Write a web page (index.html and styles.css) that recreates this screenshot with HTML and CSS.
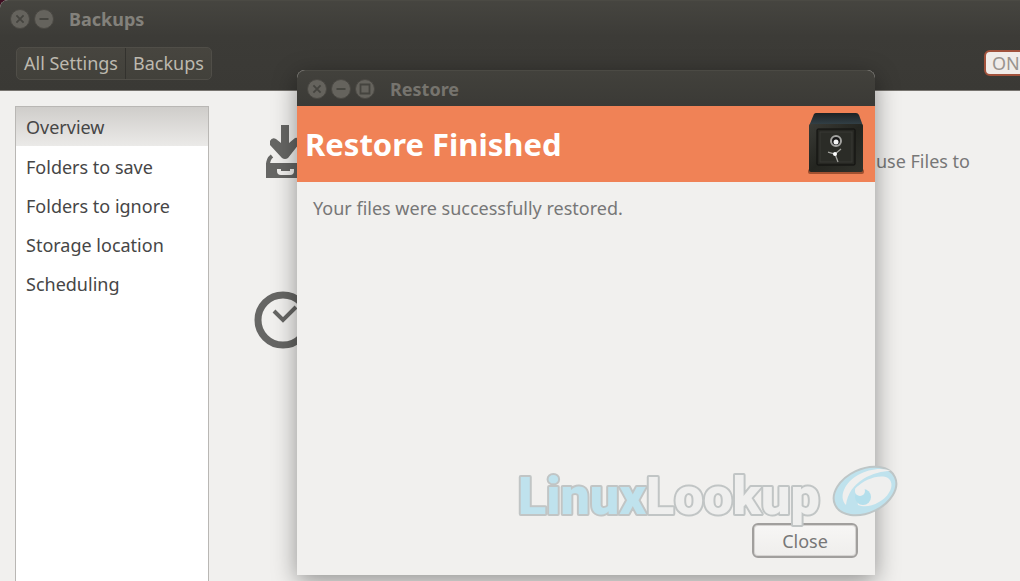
FILE: index.html
```html
<!DOCTYPE html>
<html lang="en">
<head>
<meta charset="utf-8">
<title>Backups</title>
<link rel="stylesheet" href="styles.css">
</head>
<body>
<div class="desktop">
  <div class="window">
    <header class="window-header">
      <div class="titlebar">
        <button class="wm-button" aria-label="Close window"><svg viewBox="0 0 20 20"><path d="M6 6l8 8M14 6l-8 8"/></svg></button>
        <button class="wm-button" aria-label="Minimize window"><svg viewBox="0 0 20 20"><path d="M5 10h10"/></svg></button>
        <h1 class="window-title">Backups</h1>
      </div>
      <div class="toolbar">
        <nav class="crumbs">
          <button class="crumb">All Settings</button>
          <button class="crumb">Backups</button>
        </nav>
        <button class="switch" role="switch" aria-checked="true" aria-label="ON">ON</button>
      </div>
    </header>
    <div class="window-body">
      <nav class="sidebar">
        <a class="side-item selected" href="#overview">Overview</a>
        <a class="side-item" href="#save">Folders to save</a>
        <a class="side-item" href="#ignore">Folders to ignore</a>
        <a class="side-item" href="#storage">Storage location</a>
        <a class="side-item" href="#scheduling">Scheduling</a>
      </nav>
      <main class="overview">
        <section class="row">
          <svg class="row-icon" viewBox="0 0 60 60" aria-hidden="true">
            <path class="fill" d="M27 3h8v18l6-5q4-1 4 4v2L34 36q-3 2-6 0L16 23v-4q2-4 6-2l5 4z"/>
            <path class="line" d="M14 43q0-6 4-9"/>
            <path class="fill" d="M12 41h38v15H12zM23 47v2q0 4 4 4h9q4 0 4-4v-2h-4v2h-9v-2z" fill-rule="evenodd"/>
          </svg>
          <p class="row-text">use Files to</p>
        </section>
        <section class="row">
          <svg class="row-icon" viewBox="0 0 60 60" aria-hidden="true">
            <circle class="ring" cx="29" cy="30" r="25"/>
            <path class="hands" d="M20 21l9 9 13-13"/>
          </svg>
        </section>
      </main>
    </div>
  </div>

  <div class="dialog" role="dialog" aria-labelledby="dialog-heading">
    <div class="dialog-titlebar">
      <button class="wm-button" aria-label="Close dialog"><svg viewBox="0 0 20 20"><path d="M6 6l8 8M14 6l-8 8"/></svg></button>
      <button class="wm-button" aria-label="Minimize dialog"><svg viewBox="0 0 20 20"><path d="M5 10h10"/></svg></button>
      <button class="wm-button" aria-label="Maximize dialog"><svg viewBox="0 0 20 20"><path d="M5 5h10v10H5z"/></svg></button>
      <span class="window-title">Restore</span>
    </div>
    <div class="banner">
      <h2 class="banner-title" id="dialog-heading">Restore Finished</h2>
      <svg class="safe" viewBox="0 0 60 66" aria-hidden="true">
        <defs>
          <linearGradient id="safe-top" x1="0" y1="0" x2="0" y2="1"><stop offset="0" stop-color="#1d2224"/><stop offset="1" stop-color="#35444b"/></linearGradient>
          <linearGradient id="safe-front" x1="0" y1="0" x2="1" y2="1"><stop offset="0" stop-color="#3a3b36"/><stop offset=".5" stop-color="#242520"/><stop offset="1" stop-color="#30312b"/></linearGradient>
        </defs>
        <rect x="2" y="58" width="56" height="5" rx="2" fill="#6b2f18" opacity=".6"/>
        <path d="M8 3q1-1 2-1h40q2 0 3 2l4 11H3z" fill="url(#safe-top)"/>
        <rect x="3" y="13" width="54" height="48" rx="2" fill="url(#safe-front)"/>
        <rect x="11" y="18" width="38" height="36" rx="1" fill="#262722" stroke="#0f0f0d"/>
        <rect x="14" y="21" width="32" height="30" fill="#2b2c27" stroke="#383934"/>
        <circle cx="30" cy="30" r="5" fill="#171717" stroke="#a4a4a1" stroke-width="2"/>
        <circle cx="30" cy="31" r="2.5" fill="#f5f5f5"/>
        <path d="M29 43l-7-2M29 43l6-5M29 43l3 8" stroke="#a3a39e" stroke-width="1.3"/>
        <circle cx="29" cy="43" r="2" fill="#fff"/>
      </svg>
    </div>
    <div class="dialog-content">
      <p class="message">Your files were successfully restored.</p>
      <button class="close-button">Close</button>
    </div>
  </div>

  <svg class="watermark" viewBox="0 0 384 66" role="img" aria-label="LinuxLookup">
    <text class="mark-text" x="1" y="50"><tspan class="mark-blue">Linux</tspan><tspan class="mark-gray">Lookup</tspan></text>
    <ellipse class="mark-eye" cx="348" cy="27" rx="33" ry="22" transform="rotate(-25 348 27)"/>
    <path class="mark-white" d="M329 41C321 33 328 18 341 11C351 5 366 3 374 7C357 7 332 17 329 41z"/>
    <path class="mark-white" d="M338 25C347 15 363 10 371 14C379 20 372 33 362 38C354 43 346 43 341 41Z"/>
    <circle class="mark-pupil" cx="346" cy="33" r="8"/>
    <circle class="mark-glint" cx="343" cy="27" r="5"/>
  </svg>
</div>
</body>
</html>
```
FILE: styles.css
```css
* { box-sizing: border-box; }

body {
  margin: 0;
  background: #f1f0ee;
  color: #4c4c4c;
  font: 18px/24px "Noto Sans", "Open Sans", sans-serif;
}

button { font: inherit; cursor: pointer; }
h1, h2, p { margin: 0; }

.desktop {
  position: relative;
  height: 100vh;
  overflow: hidden;
  background: #3d0d20;
}

.window {
  display: flex;
  flex-direction: column;
  height: 100%;
  overflow: hidden;
  border-radius: 8px 0 0 0;
  background: #f1f0ee;
}

.window-header {
  background: linear-gradient(#464540, #3c3b37 40%, #3a3935);
  border-top: 1px solid #4b4a44;
  border-bottom: 1px solid #77746f;
}

.titlebar,
.dialog-titlebar {
  display: flex;
  align-items: center;
  gap: 4px;
  height: 35px;
  padding: 0 10px;
}

.wm-button {
  width: 20px;
  height: 20px;
  padding: 0;
  border: 1px solid #4a4843;
  border-radius: 50%;
  background: #65635d;
}

.wm-button svg {
  display: block;
  width: 18px;
  height: 18px;
  fill: none;
  stroke: #45443f;
  stroke-width: 2;
}

.window-title {
  margin-left: 11px;
  color: #83817b;
  font-size: 18px;
  font-weight: 700;
}

.toolbar {
  display: flex;
  align-items: center;
  justify-content: space-between;
  height: 54px;
  padding-left: 16px;
}

.crumbs {
  display: flex;
  border: 1px solid #504e48;
  border-radius: 5px;
  background: linear-gradient(#47453f, #42413b);
}

.crumb {
  height: 31px;
  padding: 0 7px;
  border: 0;
  background: none;
  color: #bdb9af;
}

.crumb + .crumb { border-left: 1px solid #33322e; }

.switch {
  width: 88px;
  height: 26px;
  margin-right: -52px;
  padding: 0 6px;
  border: 2px solid #a1523c;
  border-radius: 6px;
  background: #f0ece9;
  color: #99948f;
  line-height: 22px;
  text-align: left;
}

.window-body {
  display: flex;
  flex: 1;
  padding: 15px 0 0 15px;
}

.sidebar {
  display: flex;
  flex: 0 0 194px;
  flex-direction: column;
  border: 1px solid #b9b7b4;
  border-bottom: 0;
  background: #fff;
}

.side-item {
  height: 39px;
  padding: 0 10px;
  color: #464646;
  line-height: 40px;
  text-decoration: none;
}

.selected {
  margin-bottom: 1px;
  background: linear-gradient(#cfcdca, #ebeae8);
}

.overview {
  display: flex;
  flex: 1;
  flex-direction: column;
  gap: 108px;
  padding: 16px 50px 0 45px;
}

.row {
  display: flex;
  justify-content: space-between;
  height: 60px;
}

.row-icon { width: 60px; height: 60px; }
.row-text { padding-top: 27px; color: #777; }
.fill { fill: #666664; }
.line { fill: none; stroke: #666664; stroke-width: 4; }
.ring { fill: none; stroke: #666664; stroke-width: 7; }
.hands { fill: none; stroke: #666664; stroke-width: 4; }

.dialog {
  position: absolute;
  top: 70px;
  right: 145px;
  bottom: 6px;
  left: 297px;
  display: flex;
  flex-direction: column;
  border-radius: 8px 8px 0 0;
  background: #f1f0ee;
  box-shadow: 0 6px 24px rgba(0, 0, 0, .4);
}

.dialog-titlebar {
  height: 36px;
  border-top: 1px solid #4b4a44;
  border-radius: 8px 8px 0 0;
  background: linear-gradient(#42413c, #3b3a36);
}

.dialog-titlebar .window-title { color: #76746e; }

.banner {
  display: flex;
  align-items: center;
  justify-content: space-between;
  height: 76px;
  padding: 0 9px 0 8px;
  background: #f08256;
}

.banner-title {
  color: #fff;
  font-size: 31px;
  font-weight: 700;
  line-height: 38px;
}

.safe { width: 60px; height: 66px; }

.dialog-content {
  display: flex;
  flex: 1;
  flex-direction: column;
  justify-content: space-between;
  padding: 14px 17px 17px 16px;
}

.message { color: #777; }

.close-button {
  align-self: flex-end;
  width: 106px;
  height: 35px;
  padding: 0;
  border: 2px solid #a19f9d;
  border-radius: 6px;
  background: linear-gradient(#f7f6f5, #efeeec);
  box-shadow: inset 0 0 0 1px #d6d4d2;
  color: #777;
}

.watermark {
  position: absolute;
  top: 464px;
  right: 119px;
  width: 384px;
  height: 66px;
  pointer-events: none;
}

.mark-text {
  font: 900 52px Roboto, "Liberation Sans", sans-serif;
  paint-order: stroke;
  stroke: #c1c5c5;
  stroke-width: 4px;
  stroke-linejoin: round;
}

.mark-blue { fill: #bfe2ed; }
.mark-gray { fill: #efefee; }
.mark-eye { fill: #bfe2ed; stroke: #bec6c7; stroke-width: 2px; }
.mark-white { fill: #efefee; }
.mark-pupil { fill: #b4dfec; }
.mark-glint { fill: #efefee; }
```
